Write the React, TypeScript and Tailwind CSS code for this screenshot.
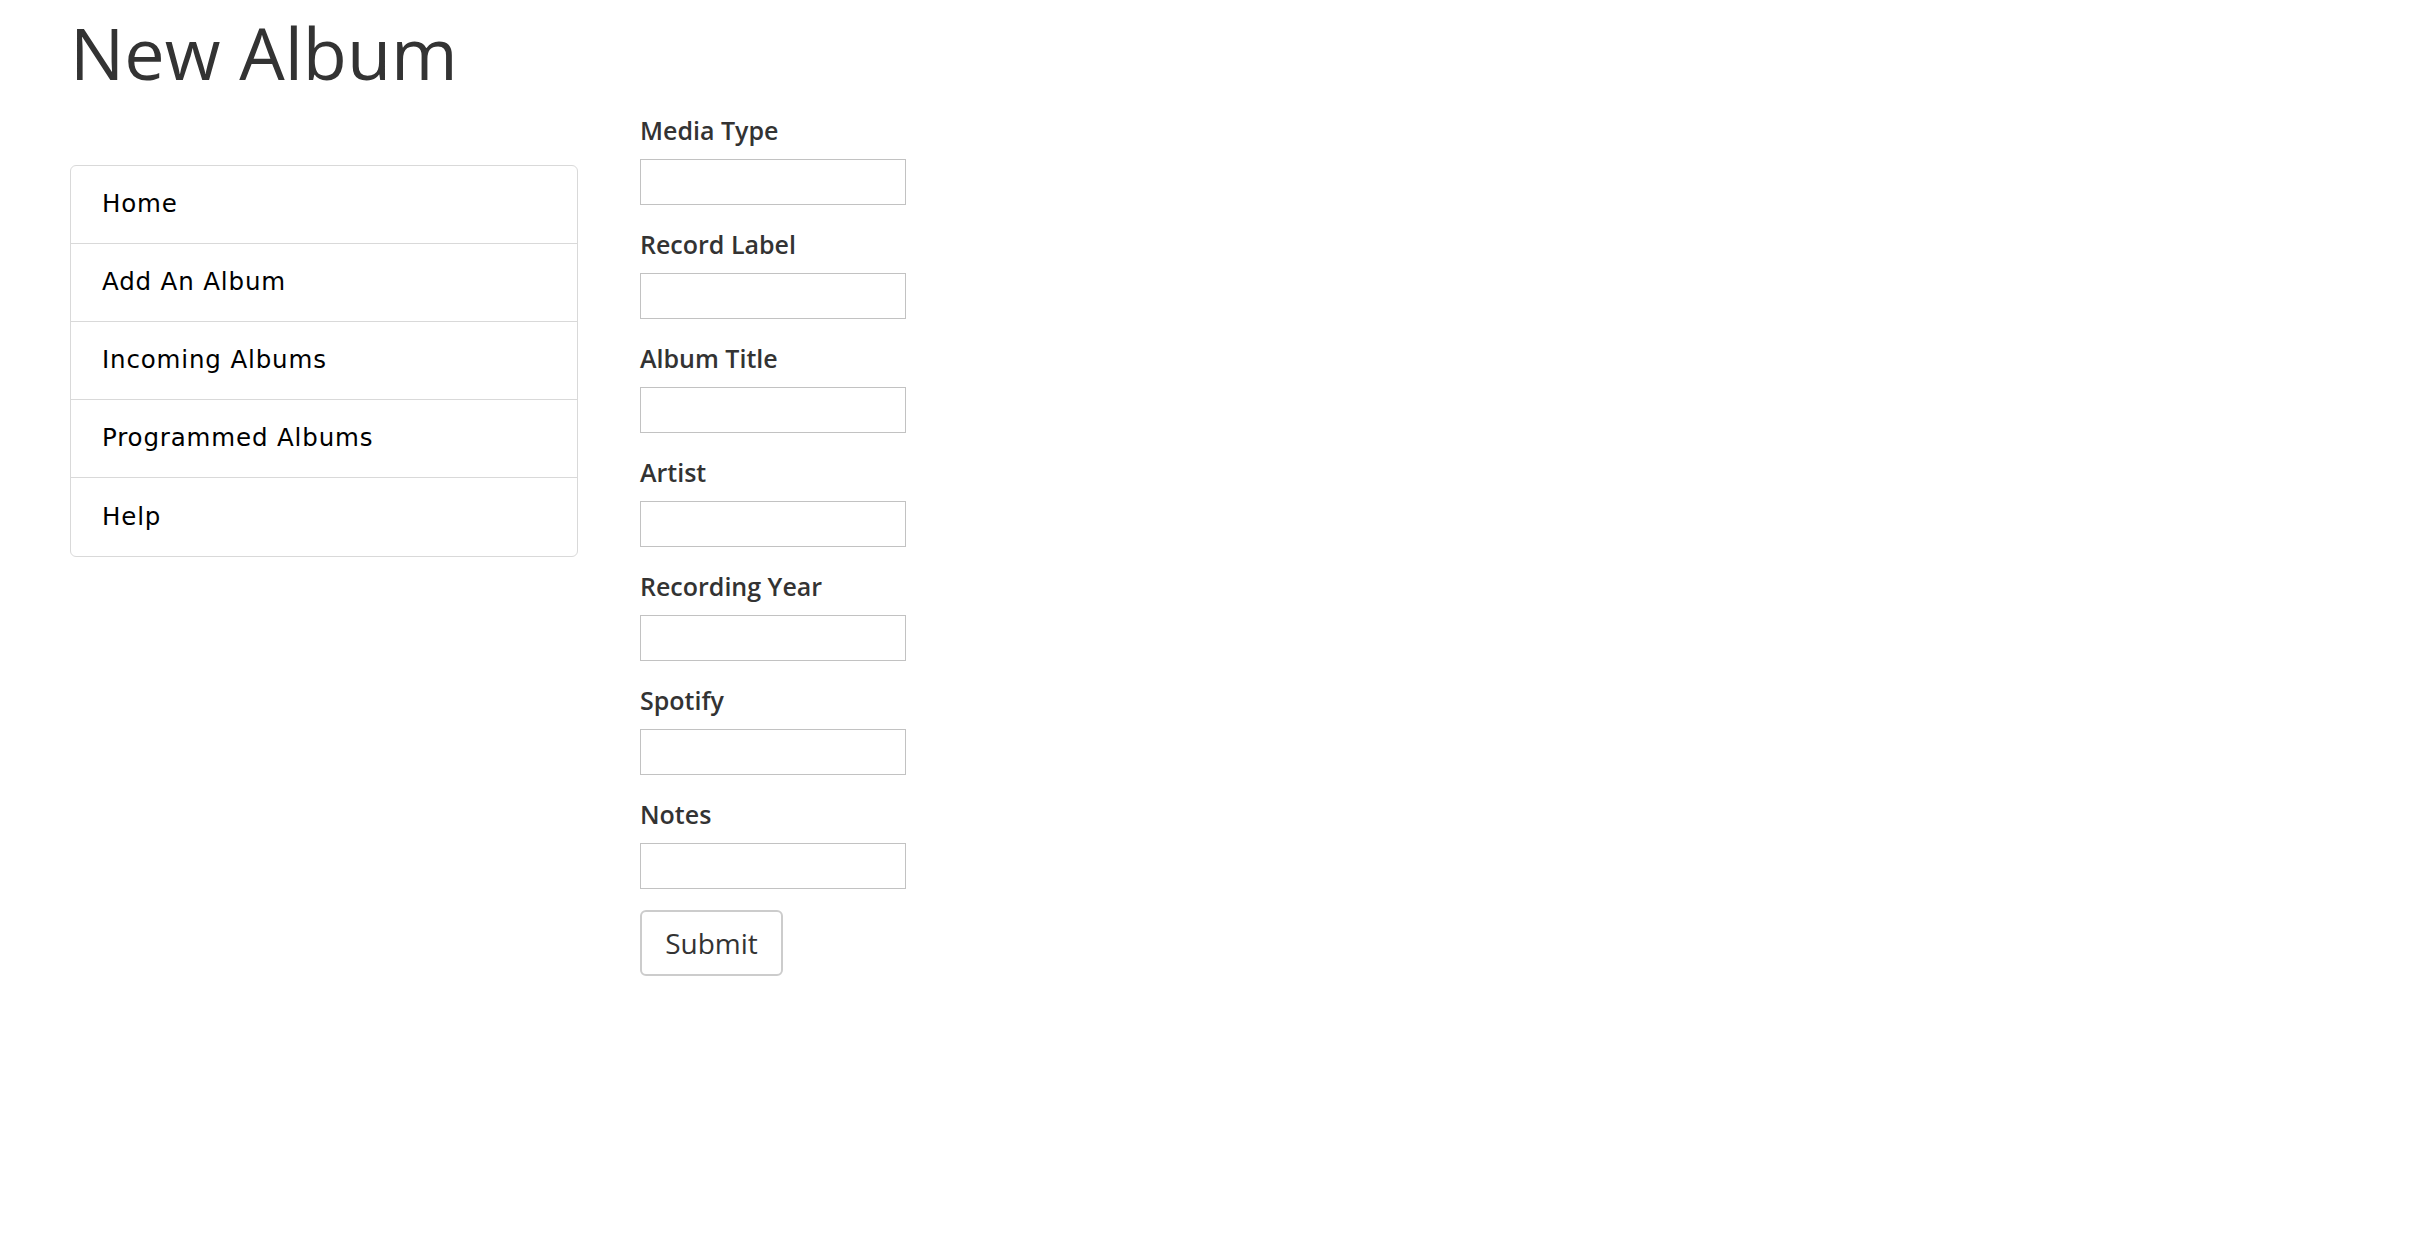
import React from "react";

const navItems = ["Home", "Add An Album", "Incoming Albums", "Programmed Albums", "Help"];

const fields = [
  "Media Type",
  "Record Label",
  "Album Title",
  "Artist",
  "Recording Year",
  "Spotify",
  "Notes",
];

export default function App() {
  return (
    <div className="min-h-screen bg-white text-[#333] font-['Open_Sans',sans-serif] px-[70px]">
      <h1 className="pt-[12px] text-[72px] leading-[81px] font-normal">New Album</h1>

      <div className="flex mt-[19px]">
        {/* sidebar nav */}
        <div className="w-[508px] mt-[53px] self-start border border-[#d9d9d9] rounded-[6px] divide-y divide-[#d9d9d9] font-['DejaVu_Sans',sans-serif] text-[24.5px] tracking-[0.85px] text-black">
          {navItems.map((item) => (
            <a key={item} href="#" className="flex items-center h-[78px] pl-[31px]">
              {item}
            </a>
          ))}
        </div>

        {/* form */}
        <form className="ml-[62px] flex flex-col">
          {fields.map((label) => (
            <div key={label} className="flex flex-col mb-[21px]">
              <label className="h-[36px] leading-[36px] text-[25px] font-semibold mb-[11px]">{label}</label>
              <input
                type="text"
                className="w-[266px] h-[46px] border border-[#c2c2c2] bg-white outline-none"
              />
            </div>
          ))}
          <div>
            <button
              type="button"
              className="h-[66px] w-[143px] border-2 border-[#ccc] rounded-[6px] bg-white text-[28px] text-[#333]"
            >
              Submit
            </button>
          </div>
        </form>
      </div>
    </div>
  );
}
